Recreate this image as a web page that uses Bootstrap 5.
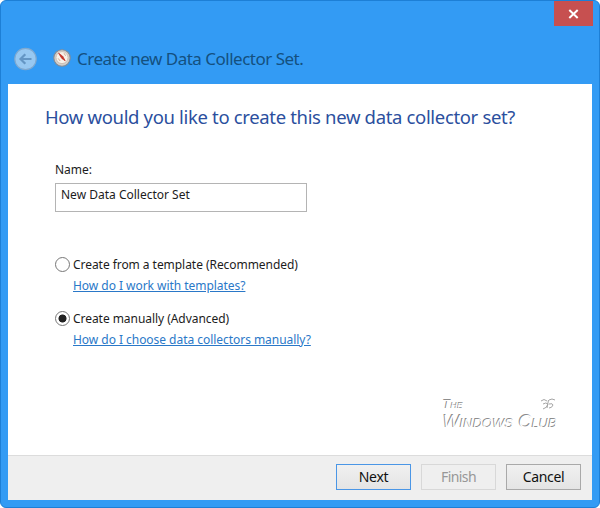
<!DOCTYPE html>
<html lang="en">
<head>
<meta charset="utf-8">
<meta name="viewport" content="width=device-width, initial-scale=1">
<title>Create new Data Collector Set</title>
<link href="https://cdn.jsdelivr.net/npm/bootstrap@5.3.0/dist/css/bootstrap.min.css" rel="stylesheet">
<style>
body{font-family:"Noto Sans","Open Sans",sans-serif;font-size:12px;line-height:16px;color:#1c1c1c;background:#fff}
.wizard{width:600px;height:508px;background:#339bf4;border:1px solid #1d7fd6;border-radius:6px;padding:0 7px 7px}
.titlebar{height:83px}
.close-btn{width:39px;height:25px;background:#c75050;border:0;margin-right:-1px}
.title-row{height:34px;padding-left:6px}
.title-text{font-size:17px;letter-spacing:-.5px;line-height:24px;color:#14507f;margin-left:6px;white-space:nowrap}
.app-icon{margin-left:16px;margin-top:-2px}
.page-body{padding:0 0 0 37px}
.heading{font-size:18.5px;letter-spacing:-.34px;line-height:26px;color:#2b4f9e;margin:20px 0 0;white-space:nowrap;font-weight:400}
.fields{padding-left:10px;margin-top:32px}
.name-box{width:252px;height:29px;font:inherit;color:#1c1c1c;border:1px solid #b4b4b4;padding:0 5px 7px;margin-top:5px;background:#fff}
.choice{gap:3px;height:16px;margin-top:17px}
.name-box + .choice{margin-top:45px}
.choice label{letter-spacing:-.05px}
.choice .form-check-input{width:15px;height:15px;border:1px solid #777;background:#fff;box-shadow:none;margin:-2px 0 0}
.choice .form-check-input:checked{background:radial-gradient(circle,#222 0 3.6px,#fff 4.4px);border-color:#777}
.help{display:inline-block;margin:5px 0 0 18px;color:#2a78c8;white-space:nowrap;letter-spacing:-.04px}
.watermark{font-family:"Liberation Sans",sans-serif;font-style:italic;font-variant:small-caps;color:#fff;text-shadow:-1px -1px 0 #8d8d8d;margin:0 35px 24px 0;width:114px}
.wm-top{font-size:13px;line-height:16px}
.wm-main{font-size:18px;line-height:18px;white-space:nowrap;letter-spacing:.05px}
.actions{height:45px;background:#efefef;border-top:1px solid #dcdcdc;padding:0 11px 2px 0;gap:10px}
.wbtn{width:75px;height:26px;padding:0;border-radius:0;border:1px solid #a9a9a9;background:linear-gradient(#f0f0f0,#e4e4e4);font-size:14px;letter-spacing:-.35px;line-height:22px;color:#111}
.wbtn.primary{border-color:#4a96e6}
.wbtn:disabled{opacity:1;background:#efefef;border-color:#d8d8d8;color:#979797;letter-spacing:-.6px}
</style>
</head>
<body>
<main class="wizard d-flex flex-column overflow-hidden">
  <header class="titlebar d-flex flex-column flex-shrink-0">
    <div class="d-flex justify-content-end">
      <button class="close-btn d-flex align-items-center justify-content-center p-0" aria-label="Close">
        <svg width="11" height="10" viewBox="0 0 11 10"><path d="M1.3 1l8.4 8M9.7 1L1.3 9" stroke="#fff" stroke-width="2"/></svg>
      </button>
    </div>
    <div class="title-row d-flex align-items-center mt-3">
      <svg width="23" height="24" viewBox="0 0 23 24"><circle cx="11.5" cy="12" r="10.7" fill="#97c8f1" stroke="#7fa9d0" stroke-width="1.2"/><path d="M17.5 12H6.5M11.3 7.2L6.5 12l4.8 4.8" fill="none" stroke="#6496c4" stroke-width="2.2"/></svg>
      <svg class="app-icon" width="18" height="18" viewBox="0 0 18 18"><circle cx="9" cy="9" r="8.2" fill="#d3cfcb" stroke="#858b94" stroke-width="1.1"/><circle cx="9" cy="8.6" r="6" fill="#f8f2ea" stroke="#c9b9ac" stroke-width=".8"/><path d="M5.6 4.2l3.2 5.2 3.4 2.4-2.6-4.6z" fill="#c3332a" stroke="#c3332a" stroke-width=".8"/><path d="M11 4.2l1.6 2.6M5.2 9.4l2 2.6" stroke="#d0ab98"/></svg>
      <span class="title-text">Create new Data Collector Set.</span>
    </div>
  </header>
  <section class="page-body bg-white flex-grow-1 d-flex flex-column">
    <h1 class="heading">How would you like to create this new data collector set?</h1>
    <div class="fields">
      <label class="d-block" for="setName">Name:</label>
      <input id="setName" class="name-box d-block" value="New Data Collector Set">
      <div class="choice d-flex align-items-center">
        <input class="form-check-input" type="radio" name="mode" id="tpl"><label for="tpl">Create from a template (Recommended)</label>
      </div>
      <a class="help" href="#">How do I work with templates?</a>
      <div class="choice d-flex align-items-center">
        <input class="form-check-input" type="radio" name="mode" id="man" checked><label for="man">Create manually (Advanced)</label>
      </div>
      <a class="help" href="#">How do I choose data collectors manually?</a>
    </div>
    <div class="watermark mt-auto align-self-end">
      <div class="wm-top d-flex justify-content-between">The
        <svg width="17" height="15" viewBox="0 0 17 15"><path d="M1 4q3-3 6 0M9 3q3-2 6 0M3 7q3-2 5 0-1 4-5 5M9 7q4-1 4 1-1 3-4 3M8.500 3L7 11" fill="none" stroke="#a5a5a5"/></svg>
      </div>
      <div class="wm-main">Windows Club</div>
    </div>
  </section>
  <footer class="actions d-flex justify-content-end align-items-center flex-shrink-0">
    <button class="btn wbtn primary">Next</button>
    <button class="btn wbtn" disabled>Finish</button>
    <button class="btn wbtn">Cancel</button>
  </footer>
</main>
<script src="https://cdn.jsdelivr.net/npm/bootstrap@5.3.0/dist/js/bootstrap.bundle.min.js"></script>
</body>
</html>
